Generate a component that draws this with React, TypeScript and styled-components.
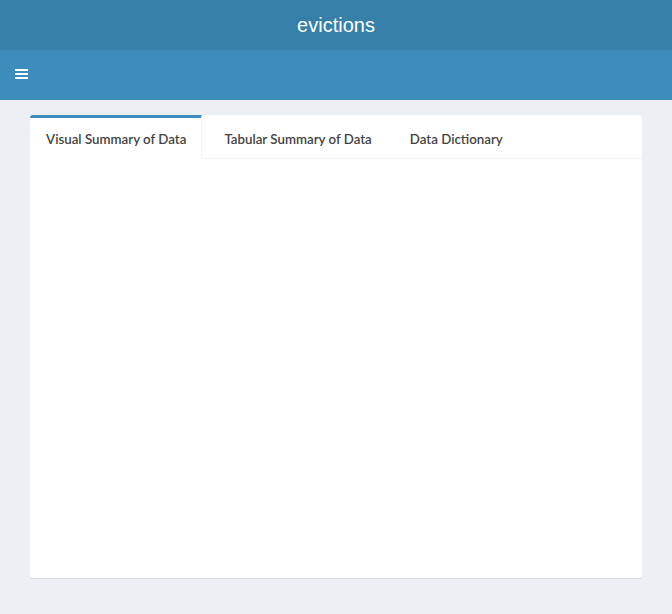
import { useState } from "react";
import styled, { createGlobalStyle } from "styled-components";

const GlobalStyle = createGlobalStyle`
    html, body {
        margin: 0;
        padding: 0;
        background: #ecf0f5;
    }
    body {
        font-family: Lato, "Open Sans", sans-serif;
        color: #333;
    }
`

const Page = styled.div`
    min-height: 614px;
    background: #ecf0f5;
`

const Header = styled.div`
    height: 50px;
    background: #367fa9;
    display: flex;
    align-items: center;
    justify-content: center;
`

const Title = styled.div`
    color: #fff;
    font-family: "Liberation Sans", Arial, sans-serif;
    font-size: 20px;
    line-height: 50px;
`

const Navbar = styled.div`
    height: 50px;
    background: #3c8dbc;
    display: flex;
    align-items: center;
`

const Toggle = styled.button`
    background: transparent;
    border: 0;
    padding: 0 15px;
    height: 50px;
    display: flex;
    align-items: center;
    cursor: pointer;
`

const Content = styled.div`
    padding: 15px 30px 36px;
`

const Box = styled.div`
    background: #fff;
    border-radius: 3px;
    box-shadow: 0 1px 1px rgba(0, 0, 0, 0.1);
    height: 463px;
    display: flex;
    flex-direction: column;
`

const TabBar = styled.ul`
    list-style: none;
    margin: 0;
    padding: 0;
    display: flex;
    border-bottom: 1px solid #f4f4f4;
    border-top-right-radius: 3px;
    border-top-left-radius: 3px;
`

const Tab = styled.li<{ $active: boolean }>`
    margin-right: 5px;
    margin-bottom: -1px;
    border-top: 3px solid ${p => p.$active ? "#3c8dbc" : "transparent"};
    background: ${p => p.$active ? "#fff" : "transparent"};
    border-right: 1px solid ${p => p.$active ? "#f4f4f4" : "transparent"};
    border-left: 1px solid transparent;
    border-bottom: 1px solid ${p => p.$active ? "#fff" : "transparent"};
    &:first-child {
        border-left: 0;
        border-top-left-radius: 3px;
    }
`

const TabLink = styled.a`
    display: block;
    padding: 11px 15px 9px 16px;
    line-height: 20px;
    font-size: 13.3px;
    font-weight: 600;
    color: #444;
    text-decoration: none;
    cursor: pointer;
    white-space: nowrap;
`

const TabPane = styled.div`
    flex: 1;
    padding: 10px;
`

const tabs = ["Visual Summary of Data", "Tabular Summary of Data", "Data Dictionary"]

export default function App() {
    const [active, setActive] = useState(0)

    return (<Page>
        <GlobalStyle />
        <Header>
            <Title>evictions</Title>
        </Header>
        <Navbar>
            <Toggle aria-label="Toggle navigation">
                <svg width="13" height="12" viewBox="0 0 13 12">
                    <rect x="0" y="0" width="13" height="2" fill="#fff" />
                    <rect x="0" y="4" width="13" height="2" fill="#fff" />
                    <rect x="0" y="8" width="13" height="2" fill="#fff" />
                </svg>
            </Toggle>
        </Navbar>
        <Content>
            <Box>
                <TabBar>
                    {tabs.map((t, i) => (
                        <Tab key={t} $active={i === active}>
                            <TabLink onClick={() => setActive(i)}>{t}</TabLink>
                        </Tab>
                    ))}
                </TabBar>
                <TabPane />
            </Box>
        </Content>
    </Page>)
}
